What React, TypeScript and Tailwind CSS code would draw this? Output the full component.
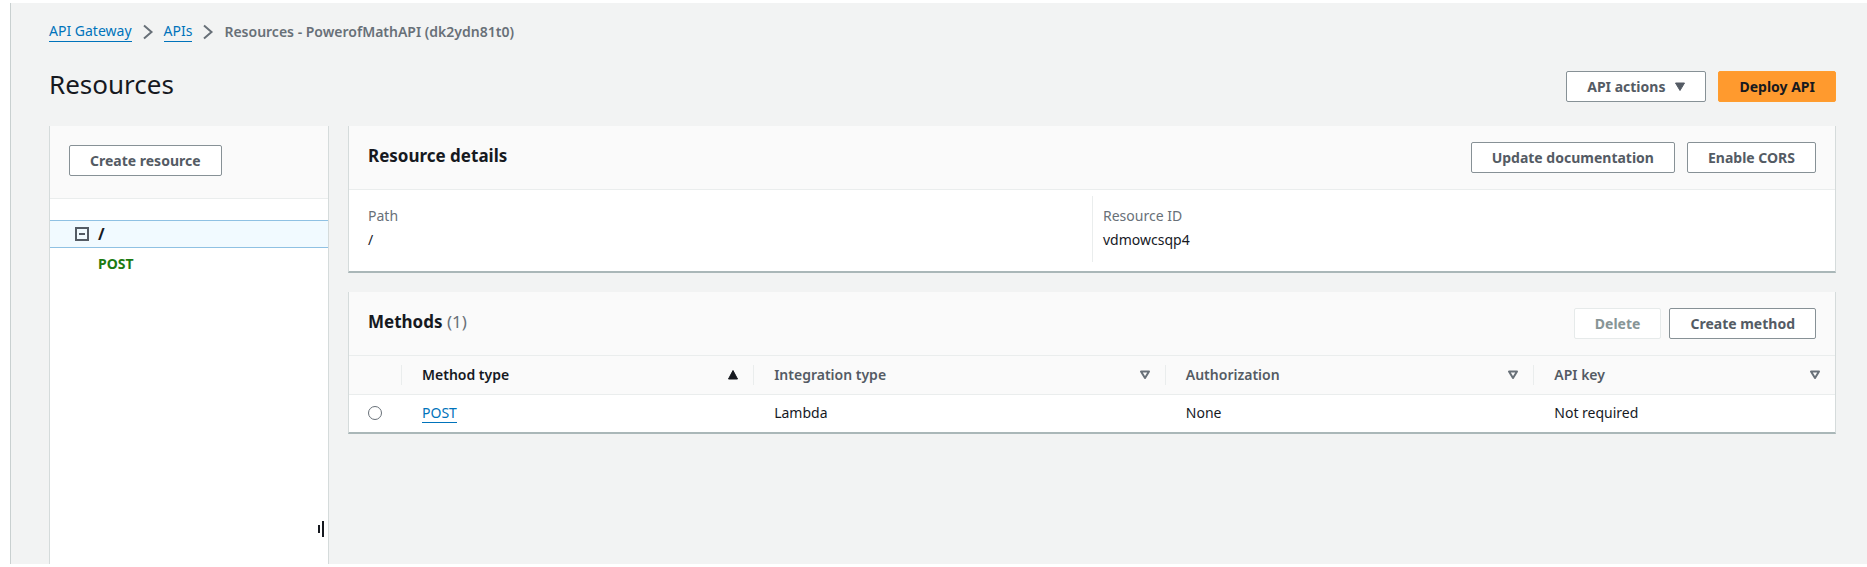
import type { ReactNode } from "react";

const columns = [
  { label: "Method type", sorted: true },
  { label: "Integration type", sorted: false },
  { label: "Authorization", sorted: false },
  { label: "API key", sorted: false },
];

function Button({ children, variant = "normal" }: { children: ReactNode; variant?: "normal" | "primary" | "disabled" }) {
  const look = {
    normal: "border-[#879196] bg-white text-[#545b64]",
    primary: "border-[#ff9d2e] bg-[#ff9a2e] text-[#16191f]",
    disabled: "border-[#e6eaea] bg-white text-[#879596]",
  }[variant];
  return (
    <button
      type="button"
      disabled={variant === "disabled"}
      className={`flex h-[31px] items-center justify-center gap-[10px] rounded-[2px] border px-5 text-sm font-bold whitespace-nowrap ${look}`}
    >
      {children}
    </button>
  );
}

function Chevron() {
  return (
    <svg className="h-4 w-3" viewBox="0 0 12 16" fill="none" stroke="#687078" strokeWidth="2" aria-hidden="true">
      <path d="M2 1.5 9.5 8 2 14.5" />
    </svg>
  );
}

function SortIcon({ sorted }: { sorted: boolean }) {
  return sorted ? (
    <svg className="h-3 w-3 shrink-0" viewBox="0 0 12 12" aria-hidden="true">
      <path d="M6 1.5 10.5 10H1.5Z" fill="#16191f" stroke="#16191f" strokeLinejoin="round" />
    </svg>
  ) : (
    <svg className="h-3 w-3 shrink-0" viewBox="0 0 12 12" aria-hidden="true">
      <path d="M2 2.5H10L6 9Z" fill="none" stroke="#687078" strokeWidth="2" strokeLinejoin="round" />
    </svg>
  );
}

function Panel({ title, actions, children }: { title: ReactNode; actions: ReactNode; children: ReactNode }) {
  return (
    <section className="border-x border-b-2 border-x-[#d5dbdb] border-b-[#aab7b8] bg-white">
      <header className="flex h-16 items-start justify-between border-b border-[#eaeded] bg-[#fafafa] px-[19px] pt-4">
        <h2 className="text-[17px] leading-7 font-bold">{title}</h2>
        {actions}
      </header>
      {children}
    </section>
  );
}

export default function App() {
  return (
    <div className="flex min-h-screen flex-col bg-white py-[3px] pl-[10px] font-['Noto_Sans',sans-serif] text-sm text-[#16191f]">
      <div className="flex flex-1 flex-col border-l border-[#c9d0d0] bg-[#f2f3f3] pr-[31px] pl-[38px]">
        <nav aria-label="Breadcrumbs" className="pt-[18px]">
          <ol className="flex items-center gap-[10px] leading-5">
            <li>
              <a href="#gateway" className="block border-b border-[#0073bb] text-[#0073bb]">API Gateway</a>
            </li>
            <li><Chevron /></li>
            <li>
              <a href="#apis" className="block border-b border-[#0073bb] text-[#0073bb]">APIs</a>
            </li>
            <li><Chevron /></li>
            <li className="font-semibold text-[#687078]">Resources - PowerofMathAPI (dk2ydn81t0)</li>
          </ol>
        </nav>

        <div className="mt-6 flex items-end justify-between">
          <h1 className="text-[26px] leading-9">Resources</h1>
          <div className="flex gap-3">
            <Button>
              API actions
              <svg className="h-[10px] w-[10px]" viewBox="0 0 10 10" aria-hidden="true">
                <path d="M.5 1H9.500L5 8.500Z" fill="#545b64" stroke="#545b64" strokeLinejoin="round" />
              </svg>
            </Button>
            <Button variant="primary">Deploy API</Button>
          </div>
        </div>

        <div className="mt-6 flex flex-1 gap-[19px]">
          <aside className="flex w-[280px] shrink-0 flex-col border-x border-[#d5dbdb] bg-white">
            <div className="flex h-[73px] items-start border-b border-[#eaeded] bg-[#fafafa] px-[19px] pt-[19px]">
              <Button>Create resource</Button>
            </div>
            <ul className="mt-[21px]">
              <li className="flex h-7 items-center gap-2 border-y border-[#8fc1e3] bg-[#f1faff] pl-6">
                <button type="button" aria-label="Collapse">
                  <svg className="h-4 w-4" viewBox="0 0 16 16" fill="none" stroke="#545b64" strokeWidth="2" aria-hidden="true">
                    <path d="M2 2H14V14H2ZM5 8H11" />
                  </svg>
                </button>
                <span className="text-base font-bold">/</span>
              </li>
              <li className="flex h-8 items-center pl-12 font-bold text-[#1d7b12]">POST</li>
            </ul>
            <button type="button" aria-label="Resize panel" className="mt-auto mr-[3px] mb-[27px] self-end">
              <svg className="h-4 w-2" viewBox="0 0 8 16" fill="#16191f" aria-hidden="true">
                <path d="M1 4H3V12H1ZM5 0H7V16H5Z" />
              </svg>
            </button>
          </aside>

          <main className="flex min-w-0 flex-1 flex-col gap-[19px]">
            <Panel
              title="Resource details"
              actions={
                <div className="flex gap-3">
                  <Button>Update documentation</Button>
                  <Button>Enable CORS</Button>
                </div>
              }
            >
              <dl className="grid grid-cols-2 px-[19px] pt-[6px] pb-[9px] leading-6">
                <div className="pt-2 pb-[10px]">
                  <dt className="text-[#687078]">Path</dt>
                  <dd>/</dd>
                </div>
                <div className="border-l border-[#eaeded] pt-2 pb-[10px] pl-[10px]">
                  <dt className="text-[#687078]">Resource ID</dt>
                  <dd>vdmowcsqp4</dd>
                </div>
              </dl>
            </Panel>

            <Panel
              title={
                <>
                  Methods <span className="font-normal text-[#687078]">(1)</span>
                </>
              }
              actions={
                <div className="flex gap-2">
                  <Button variant="disabled">Delete</Button>
                  <Button>Create method</Button>
                </div>
              }
            >
              <table className="w-full table-fixed border-collapse text-left">
                <colgroup>
                  <col className="w-[53px]" />
                  <col className="w-[23.7%]" />
                  <col className="w-[27.7%]" />
                  <col className="w-[24.8%]" />
                  <col />
                </colgroup>
                <thead>
                  <tr className="h-[38px] border-b border-[#eaeded] bg-[#fafafa]">
                    <th className="p-0" aria-label="Selection">
                      <div className="h-5 border-r border-[#eaeded]" />
                    </th>
                    {columns.map((column) => (
                      <th key={column.label} className="group p-0 font-semibold">
                        <div
                          className={`flex h-5 items-center justify-between border-r border-[#eaeded] pr-[14px] pl-5 group-last:border-r-0 ${
                            column.sorted ? "text-[#16191f]" : "text-[#545b64]"
                          }`}
                        >
                          {column.label}
                          <SortIcon sorted={column.sorted} />
                        </div>
                      </th>
                    ))}
                  </tr>
                </thead>
                <tbody>
                  <tr className="h-[38px]">
                    <td className="p-0 pl-[19px]">
                      <input
                        type="radio"
                        name="method"
                        aria-label="Select POST"
                        className="block h-[14px] w-[14px] appearance-none rounded-full border border-[#687078] bg-white"
                      />
                    </td>
                    <td className="p-0 pl-5">
                      <a href="#post" className="inline-block border-b border-[#0073bb] leading-[18px] text-[#0073bb]">POST</a>
                    </td>
                    <td className="p-0 pl-5">Lambda</td>
                    <td className="p-0 pl-5">None</td>
                    <td className="p-0 pl-5">Not required</td>
                  </tr>
                </tbody>
              </table>
            </Panel>
          </main>
        </div>
      </div>
    </div>
  );
}
